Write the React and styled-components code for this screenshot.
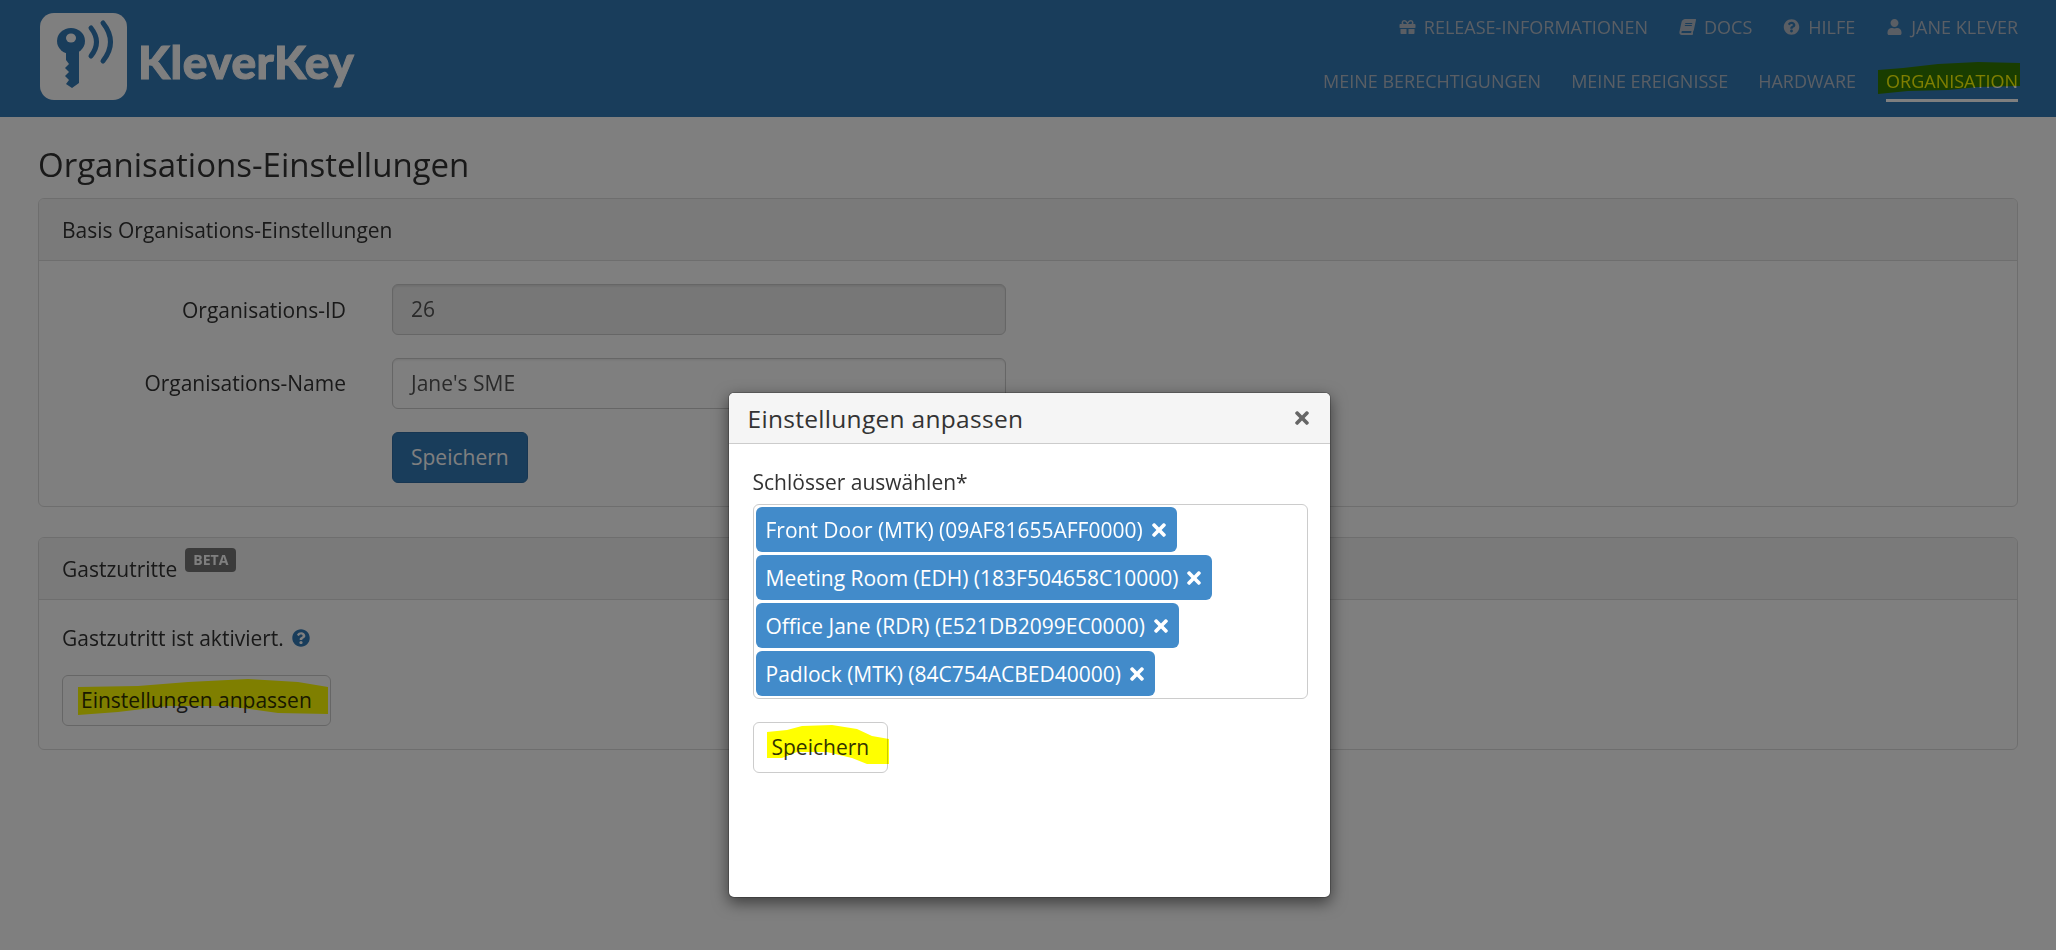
import React from "react";
import styled, { createGlobalStyle } from "styled-components";
import { FaGift, FaBook, FaQuestionCircle, FaUser, FaTimes } from "react-icons/fa";

const Global = createGlobalStyle`
  html, body { margin: 0; padding: 0; height: 100%; background: #fff; }
  body { font-family: "Open Sans", "Liberation Sans", sans-serif; color: #333; font-size: 21px; overflow: hidden; }
  * { box-sizing: border-box; }
`;

const Header = styled.header`
  height: 117px;
  background: #337ab7;
  display: flex;
  justify-content: space-between;
  padding: 13px 38px 0 40px;
`;
const Brand = styled.div`
  display: flex;
  align-items: flex-start;
  gap: 11px;
`;
const BrandMark = styled.svg`
  width: 87px;
  height: 87px;
  display: block;
`;
const BrandName = styled.span`
  font-family: "Lato", "Open Sans", sans-serif;
  font-weight: 900;
  font-size: 46px;
  line-height: 56px;
  margin-top: 21px;
  color: #fff;
  letter-spacing: 0.5px;
  -webkit-text-stroke: 1px #fff;
`;
const NavStack = styled.nav`
  display: flex;
  flex-direction: column;
  align-items: flex-end;
`;
const TopNav = styled.div`
  display: flex;
  gap: 31px;
  height: 28px;
  align-items: center;
`;
const TopLink = styled.a`
  display: flex;
  align-items: center;
  gap: 8px;
  font-size: 18px;
  color: #b4bdc8;
  text-transform: uppercase;
  white-space: nowrap;
  & svg { width: 17px; height: 16px; }
`;
const SlantedBook = styled(FaBook)`
  transform: skewX(-12deg);
`;
const MainNav = styled.div`
  display: flex;
  gap: 30px;
  margin-top: 28px;
`;
const MainLink = styled.a`
  position: relative;
  font-size: 18px;
  line-height: 25px;
  height: 33px;
  color: ${p => (p.$active ? "#fff" : "#b4bdc8")};
  text-transform: uppercase;
  white-space: nowrap;
  border-bottom: ${p => (p.$active ? "3px solid #fff" : "none")};
`;
const Marker = styled.svg`
  position: absolute;
  mix-blend-mode: multiply;
  pointer-events: none;
  overflow: visible;
`;
const NavMarker = styled(Marker)`
  left: -8px;
  top: -7px;
  width: 142px;
  height: 32px;
`;
const Main = styled.main`
  padding: 0 38px;
`;
const Title = styled.h1`
  margin: 0;
  height: 81px;
  font-size: 33px;
  font-weight: 400;
  line-height: 96px;
  color: #333;
`;
const Panel = styled.section`
  border: 1px solid #ddd;
  border-radius: 6px;
  margin-bottom: 30px;
  background: #fff;
`;
const PanelHead = styled.div`
  height: 62px;
  background: #f5f5f5;
  border-bottom: 1px solid #ddd;
  border-radius: 5px 5px 0 0;
  padding: 0 23px;
  display: flex;
  align-items: center;
  gap: 8px;
`;
const Badge = styled.span`
  background: #777;
  color: #fff;
  font-size: 14px;
  font-weight: 700;
  padding: 0 8px;
  height: 24px;
  line-height: 24px;
  border-radius: 4px;
  margin-top: -18px;
`;
const FormBody = styled.div`
  padding: 23px 0 23px;
  display: grid;
  grid-template-columns: 307px 614px;
  column-gap: 46px;
  row-gap: 22.5px;
  align-items: center;
`;
const FieldLabel = styled.label`
  text-align: right;
`;
const Field = styled.div`
  height: 51px;
  border: 1.5px solid #ccc;
  border-radius: 6px;
  padding: 0 18px;
  line-height: 48px;
  color: #555;
  background: ${p => (p.$disabled ? "#eee" : "#fff")};
  box-shadow: inset 0 1.5px 1.5px rgba(0, 0, 0, 0.075);
`;
const Button = styled.button`
  position: relative;
  height: 51px;
  font: inherit;
  line-height: 1;
  padding: 0 18px;
  border-radius: 6px;
  border: 1.5px solid ${p => (p.$primary ? "#2e6da4" : "#ccc")};
  background: ${p => (p.$primary ? "#337ab7" : "#fff")};
  color: ${p => (p.$primary ? "#fff" : "#333")};
  justify-self: start;
`;
const SaveButton = styled(Button)`
  grid-column: 2;
  margin-top: 1px;
`;
const GuestBody = styled.div`
  padding: 24px 23px 23px;
`;
const GuestText = styled.div`
  display: flex;
  align-items: center;
  gap: 8px;
  height: 28px;
  margin-bottom: 23px;
  & svg { width: 18px; height: 18px; color: #337ab7; }
`;
const AdjustMarker = styled(Marker)`
  left: 15px;
  top: 3px;
  width: 250px;
  height: 36px;
`;
const Backdrop = styled.div`
  position: fixed;
  inset: 0;
  background: rgba(0, 0, 0, 0.5);
`;
const Modal = styled.div`
  position: fixed;
  left: 727.5px;
  top: 392px;
  width: 603px;
  height: 506px;
  background: #fff;
  border: 1.5px solid rgba(0, 0, 0, 0.2);
  border-radius: 6px;
  background-clip: padding-box;
  box-shadow: 0 5px 15px rgba(0, 0, 0, 0.5);
`;
const ModalHead = styled.div`
  height: 51px;
  background: #f5f5f5;
  border-bottom: 1.5px solid #ccc;
  border-radius: 5px 5px 0 0;
  padding: 0 18px 0 19px;
  display: flex;
  justify-content: space-between;
  align-items: center;
`;
const ModalTitle = styled.h4`
  margin: 0;
  font-size: 24.5px;
  font-weight: 400;
  letter-spacing: 0.3px;
`;
const Close = styled.span`
  display: flex;
  color: #666;
  & svg { width: 20px; height: 20px; }
`;
const ModalBody = styled.div`
  padding: 24px 22px 0 24px;
`;
const SelectLabel = styled.div`
  line-height: 28px;
  height: 36px;
`;
const SelectBox = styled.div`
  border: 1.5px solid #ccc;
  border-radius: 6px;
  padding: 2px 2px;
  display: flex;
  flex-direction: column;
  align-items: flex-start;
  gap: 3px;
  height: 195px;
  margin-bottom: 23px;
`;
const Chip = styled.div`
  height: 45px;
  background: #428bca;
  border-radius: 6px;
  color: #fff;
  padding: 0 8px 0 10px;
  display: flex;
  align-items: center;
  gap: 6px;
  white-space: nowrap;
  & svg { width: 20px; height: 20px; }
`;
const SaveMarker = styled(Marker)`
  left: 13px;
  top: 1px;
  width: 122px;
  height: 40px;
`;

const brush = (d, fill) => <path d={d} fill={fill} />;
const chips = [
  "Front Door (MTK) (09AF81655AFF0000)",
  "Meeting Room (EDH) (183F504658C10000)",
  "Office Jane (RDR) (E521DB2099EC0000)",
  "Padlock (MTK) (84C754ACBED40000)",
];

export default function App() {
  return (
    <>
      <Global />
      <Header>
        <Brand>
          <BrandMark viewBox="0 0 87 87">
            <rect width="87" height="87" rx="14" fill="#fff" />
            <path d="M26 36 L39 36 L39 70 L32 75 L26 71 L29 67 L25 63 L29 59 L25 55 L29 51 L26 47 Z" fill="#337ab7" />
            <ellipse cx="31" cy="28" rx="14" ry="13" fill="#337ab7" />
            <ellipse cx="31" cy="25" rx="5" ry="4.5" fill="#fff" />
            <path d="M51 15 Q62 29 51 43" fill="none" stroke="#337ab7" strokeWidth="5" strokeLinecap="round" />
            <path d="M63 10 Q78 29 63 48" fill="none" stroke="#337ab7" strokeWidth="5" strokeLinecap="round" />
          </BrandMark>
          <BrandName>KleverKey</BrandName>
        </Brand>
        <NavStack>
          <TopNav>
            <TopLink><FaGift />Release-Informationen</TopLink>
            <TopLink><SlantedBook />Docs</TopLink>
            <TopLink><FaQuestionCircle />Hilfe</TopLink>
            <TopLink><FaUser />Jane Klever</TopLink>
          </TopNav>
          <MainNav>
            <MainLink>Meine Berechtigungen</MainLink>
            <MainLink>Meine Ereignisse</MainLink>
            <MainLink>Hardware</MainLink>
            <MainLink $active>
              Organisation
              <NavMarker viewBox="0 0 142 32">
                {brush("M0 8 L25 6 L60 2 L100 0 L142 1 L142 24 L100 25 L70 28 L30 29 L0 32 Z", "#ff0")}
              </NavMarker>
            </MainLink>
          </MainNav>
        </NavStack>
      </Header>
      <Main>
        <Title>Organisations-Einstellungen</Title>
        <Panel>
          <PanelHead>Basis Organisations-Einstellungen</PanelHead>
          <FormBody>
            <FieldLabel>Organisations-ID</FieldLabel>
            <Field $disabled>26</Field>
            <FieldLabel>Organisations-Name</FieldLabel>
            <Field>Jane's SME</Field>
            <SaveButton $primary>Speichern</SaveButton>
          </FormBody>
        </Panel>
        <Panel>
          <PanelHead>Gastzutritte<Badge>BETA</Badge></PanelHead>
          <GuestBody>
            <GuestText>Gastzutritt ist aktiviert.<FaQuestionCircle /></GuestText>
            <Button>
              Einstellungen anpassen
              <AdjustMarker viewBox="0 0 250 36">
                {brush("M0 8 L60 7 L110 3 L170 0 L220 3 L250 8 L250 35 L200 34 L150 27 L90 27 L40 33 L0 36 Z", "#ff0")}
              </AdjustMarker>
            </Button>
          </GuestBody>
        </Panel>
      </Main>
      <Backdrop />
      <Modal>
        <ModalHead>
          <ModalTitle>Einstellungen anpassen</ModalTitle>
          <Close><FaTimes /></Close>
        </ModalHead>
        <ModalBody>
          <SelectLabel>Schlösser auswählen*</SelectLabel>
          <SelectBox>
            {chips.map(c => (
              <Chip key={c}>{c}<FaTimes /></Chip>
            ))}
          </SelectBox>
          <Button>
            Speichern
            <SaveMarker viewBox="0 0 122 40">
              {brush("M0 8 L20 6 L35 2 L65 1 L90 5 L105 12 L122 15 L122 40 L100 40 L85 34 L60 28 L30 28 L15 34 L0 34 Z", "#ff0")}
            </SaveMarker>
          </Button>
        </ModalBody>
      </Modal>
    </>
  );
}
